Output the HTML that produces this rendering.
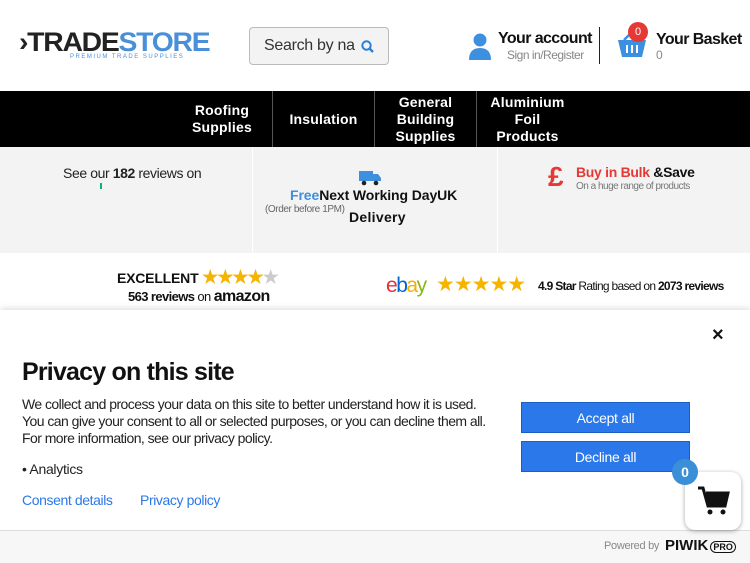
<!DOCTYPE html>
<html><head><style>
*{margin:0;padding:0;box-sizing:border-box}
body{width:750px;height:563px;overflow:hidden;font-family:"Liberation Sans",sans-serif;background:#fff;position:relative}
.a{position:absolute;white-space:nowrap}
.nav{top:91px;left:0;width:750px;height:56px;background:#000}
.ni{position:absolute;top:0;height:56px;color:#fff;font-weight:bold;font-size:14px;text-align:center;display:flex;align-items:center;justify-content:center;line-height:17px;border-left:1px solid #555;letter-spacing:0.2px}
.bar{top:147px;left:0;width:750px;height:106px;background:#f3f3f3}
.star{color:#f5b400}
.btn{position:absolute;left:521px;width:169px;height:31px;background:#2a78e9;color:#fff;font-size:14px;display:flex;align-items:center;justify-content:center;border:1px solid #1a5fc4;letter-spacing:-0.3px}
</style></head><body>
<div class="a" style="left:19px;top:27px;font-weight:900;font-size:27px;letter-spacing:-1.2px;color:#222;transform:scaleX(1.05);transform-origin:left">›TRADE<span style="color:#4a90d9">STORE</span></div>
<div class="a" style="left:70px;top:54px;font-size:6px;color:#4a90d9;letter-spacing:1.5px">PREMIUM TRADE SUPPLIES</div>
<div class="a" style="left:249px;top:27px;width:140px;height:38px;border:1px solid #bbb;border-radius:4px;background:#f3f3f3;font-size:16px;color:#333;padding:9px 14px;overflow:hidden;letter-spacing:-0.3px">Search by na
<svg style="position:absolute;right:14px;top:12px" width="13" height="13"><circle cx="5.5" cy="5.5" r="4.2" stroke="#2a7fd4" stroke-width="2" fill="none"/><path d="M8.5 8.5l3.5 3.5" stroke="#2a7fd4" stroke-width="2.3"/></svg></div>
<svg class="a" style="left:468px;top:33px" width="24" height="27"><circle cx="12" cy="7" r="6.5" fill="#3d8fe0"/><path d="M1 27 Q1 15 12 15 Q23 15 23 27Z" fill="#3d8fe0"/></svg>
<div class="a" style="left:498px;top:30px;font-weight:bold;font-size:16px;color:#111;letter-spacing:-0.6px">Your account</div>
<div class="a" style="left:507px;top:48px;font-size:12px;color:#888;letter-spacing:-0.5px">Sign in/Register</div>
<div class="a" style="left:599px;top:27px;width:1px;height:37px;background:#222"></div>
<svg class="a" style="left:616px;top:30px" width="32" height="28"><path d="M2 10 H30 L26 27 H6Z" fill="#3d8fe0"/><path d="M8 10 L16 2 L24 10" stroke="#3d8fe0" stroke-width="2.5" fill="none"/><path d="M11 15v8M16 15v8M21 15v8" stroke="#fff" stroke-width="2"/></svg>
<div class="a" style="left:628px;top:22px;width:20px;height:20px;border-radius:50%;background:#e53935;color:#fff;font-size:11px;text-align:center;line-height:20px">0</div>
<div class="a" style="left:656px;top:31px;font-weight:bold;font-size:16px;color:#111;letter-spacing:-0.6px">Your Basket</div>
<div class="a" style="left:656px;top:48px;font-size:12px;color:#888">0</div>
<div class="a nav">
<div class="ni" style="left:172px;width:100px;border:none">Roofing<br>Supplies</div>
<div class="ni" style="left:272px;width:102px">Insulation</div>
<div class="ni" style="left:374px;width:102px">General<br>Building<br>Supplies</div>
<div class="ni" style="left:476px;width:102px">Aluminium<br>Foil<br>Products</div>
</div>
<div class="a bar"></div>
<div class="a" style="left:252px;top:147px;width:1px;height:106px;background:#fff"></div>
<div class="a" style="left:497px;top:147px;width:1px;height:106px;background:#fff"></div>
<div class="a" style="left:63px;top:165px;font-size:14px;color:#222;letter-spacing:-0.4px">See our <b>182</b> reviews on</div>
<div class="a" style="left:100px;top:183px;width:2px;height:6px;background:#00b67a"></div>
<svg class="a" style="left:359px;top:169px" width="23" height="17"><rect x="0" y="2" width="14" height="10" fill="#3d8fe0"/><path d="M14 5h5l3 4v3h-8z" fill="#3d8fe0"/><circle cx="5" cy="14" r="2.3" fill="#222"/><circle cx="17" cy="14" r="2.3" fill="#222"/></svg>
<div class="a" style="left:290px;top:187px;font-size:14px;font-weight:bold;color:#111;letter-spacing:-0.1px"><span style="color:#3d8fe0">Free</span>Next Working DayUK</div>
<div class="a" style="left:265px;top:204px;font-size:10px;color:#666;letter-spacing:-0.4px">(Order before 1PM)</div>
<div class="a" style="left:349px;top:209px;font-size:14px;font-weight:bold;color:#111;letter-spacing:0.3px">Delivery</div>
<div class="a" style="left:548px;top:161px;font-size:28px;font-weight:bold;color:#e53935">£</div>
<div class="a" style="left:576px;top:164px;font-size:14px;font-weight:bold;color:#e53935;letter-spacing:-0.3px">Buy in Bulk <span style="color:#111">&amp;Save</span></div>
<div class="a" style="left:576px;top:181px;font-size:10px;color:#777;letter-spacing:-0.5px">On a huge range of products</div>
<div class="a" style="left:117px;top:267px;font-size:14px;font-weight:bold;color:#111;letter-spacing:-0.2px">EXCELLENT <span class="star" style="font-size:18px;letter-spacing:-1px">★★★★</span><span style="color:#ccc;font-size:18px">★</span></div>
<div class="a" style="left:128px;top:288px;font-size:13px;font-weight:bold;color:#111;letter-spacing:-0.6px">563 reviews<span style="font-weight:normal"> on </span><span style="font-size:16px">amazon</span></div>
<div class="a" style="left:386px;top:274px;font-size:21px;letter-spacing:-1.5px"><span style="color:#e53238">e</span><span style="color:#0064d2">b</span><span style="color:#f5af02">a</span><span style="color:#86b817">y</span></div>
<div class="a star" style="left:436px;top:272px;font-size:21px;letter-spacing:-1px">★★★★★</div>
<div class="a" style="left:538px;top:279px;font-size:12px;color:#111;letter-spacing:-0.7px"><b>4.9 Star</b> Rating based on <b>2073 reviews</b></div>
<div class="a" style="left:0;top:310px;width:750px;height:253px;background:#fff;box-shadow:0 -2px 6px rgba(0,0,0,.12)"></div>
<div class="a" style="left:712px;top:324px;font-size:20px;font-weight:bold;color:#111">×</div>
<div class="a" style="left:22px;top:358px;font-size:25px;font-weight:bold;color:#111;letter-spacing:-0.8px">Privacy on this site</div>
<div class="a" style="left:22px;top:396px;font-size:14px;line-height:17px;color:#222;letter-spacing:-0.55px">We collect and process your data on this site to better understand how it is used.<br>You can give your consent to all or selected purposes, or you can decline them all.<br>For more information, see our privacy policy.</div>
<div class="a" style="left:22px;top:461px;font-size:14px;color:#222;letter-spacing:-0.3px">• Analytics</div>
<div class="a" style="left:22px;top:492px;font-size:14px;color:#2a78e9;letter-spacing:-0.4px">Consent details</div>
<div class="a" style="left:140px;top:492px;font-size:14px;color:#2a78e9;letter-spacing:-0.4px">Privacy policy</div>
<div class="btn" style="top:402px">Accept all</div>
<div class="btn" style="top:441px">Decline all</div>
<div class="a" style="left:0;top:530px;width:750px;height:33px;background:#f7f7f7;border-top:1px solid #ddd"></div>
<div class="a" style="left:604px;top:540px;font-size:11px;color:#888;letter-spacing:-0.3px">Powered by</div>
<div class="a" style="left:665px;top:537px;font-size:15px;font-weight:900;color:#111">PIWIK<span style="font-size:9px;border:1.5px solid #111;border-radius:6px;padding:0 2px;margin-left:2px">PRO</span></div>
<div class="a" style="left:685px;top:472px;width:56px;height:58px;border-radius:10px;background:#fff;box-shadow:0 1px 5px rgba(0,0,0,.35)"></div>
<svg class="a" style="left:697px;top:485px" width="33" height="32"><path d="M1 3h5l5 18h17l3-13H9" stroke="#111" stroke-width="3" fill="none"/><path d="M9 8h22l-3 13H11z" fill="#111"/><circle cx="13" cy="27" r="2.5" fill="#111"/><circle cx="26" cy="27" r="2.5" fill="#111"/></svg>
<div class="a" style="left:672px;top:459px;width:26px;height:26px;border-radius:50%;background:#3a8fd6;color:#fff;font-weight:bold;font-size:14px;text-align:center;line-height:26px">0</div>
</body></html>
